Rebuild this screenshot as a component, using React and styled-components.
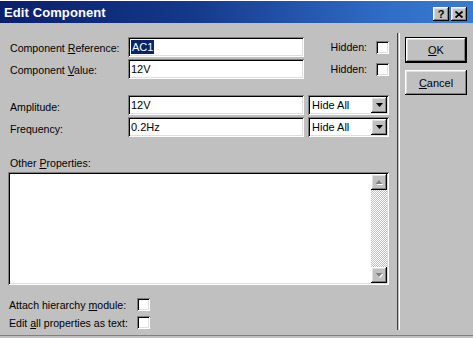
import React from "react";
import styled, { createGlobalStyle } from "styled-components";

const GlobalStyle = createGlobalStyle`
  html, body { margin: 0; padding: 0; background: #c0c0c0; }
  body { font-family: "Liberation Sans", Arial, sans-serif; }
`;

const raised = `
  background: #c0c0c0;
  box-shadow: inset -1px -1px #000, inset 1px 1px #fff, inset -2px -2px #808080, inset 2px 2px #dfdfdf;
`;
const sunken = `
  background: #fff;
  box-shadow: inset 1px 1px #808080, inset -1px -1px #fff, inset 2px 2px #000, inset -2px -2px #dfdfdf;
`;

const Window = styled.div`
  width: 473px;
  height: 338px;
  box-sizing: border-box;
  background: #c0c0c0;
  border-top: 1px solid #fff;
  display: flex;
  flex-direction: column;
  font-family: "Liberation Sans", Arial, sans-serif;
  font-size: 10.6px;
  color: #000;
  overflow: hidden;
`;

const TitleBar = styled.div`
  height: 22px;
  flex: none;
  display: flex;
  align-items: center;
  padding: 0 6px 0 4px;
  background: linear-gradient(to right, #0a1f6c 0%, #14388a 40%, #2f6bc4 80%, #3a7cd2 100%);
`;

const Title = styled.div`
  flex: 1;
  color: #fff;
  font-weight: bold;
  font-size: 13px;
  letter-spacing: 0.1px;
`;

const TitleButtons = styled.div`
  display: flex;
  gap: 2px;
  align-self: flex-end;
  margin-bottom: 2px;
`;

const CaptionButton = styled.div`
  ${raised}
  width: 16px;
  height: 14px;
  display: flex;
  align-items: center;
  justify-content: center;
  font-weight: bold;
  font-size: 11px;
  line-height: 1;
`;

const Body = styled.div`
  flex: 1;
  display: flex;
  border-bottom: 1px solid #808080;
  margin-bottom: 2px;
`;

const LeftPane = styled.div`
  width: 397px;
  box-sizing: border-box;
  padding: 14px 8px 0 8px;
  display: flex;
  flex-direction: column;
`;

const Separator = styled.div`
  width: 1px;
  border-left: 1px solid #404040;
  border-right: 1px solid #fff;
  margin: 10px 0 5px;
`;

const RightPane = styled.div`
  flex: 1;
  padding: 14px 0 0 5px;
  display: flex;
  flex-direction: column;
  gap: 7px;
`;

const Fields = styled.div`
  display: grid;
  grid-template-columns: 120px 176px 85px;
  grid-auto-rows: 20px;
  row-gap: 2px;
  align-items: center;
  margin-top: ${(p) => p.$gap || 0}px;
`;

const Label = styled.div`
  padding-left: ${(p) => (p.$indent != null ? p.$indent : 2)}px;
  padding-top: ${(p) => p.$drop || 0}px;
  white-space: nowrap;
  line-height: 14px;
`;

const U = styled.span`
  text-decoration: underline;
  text-underline-offset: 1px;
`;

const TextField = styled.div`
  ${sunken}
  height: 20px;
  box-sizing: border-box;
  display: flex;
  align-items: center;
  padding-left: 3px;
  font-size: 11px;
`;

const Selected = styled.span`
  background: #0a246a;
  color: #fff;
  padding: 1px 1px;
`;

const HiddenCell = styled.div`
  display: flex;
  align-items: center;
  justify-content: flex-end;
  gap: 9px;
`;

const Check = styled.div`
  ${sunken}
  width: 13px;
  height: 13px;
  box-sizing: border-box;
`;

const SelectBox = styled.div`
  ${sunken}
  margin-left: 4px;
  height: 20px;
  box-sizing: border-box;
  padding: 2px;
  display: flex;
  align-items: stretch;
  font-size: 11px;
`;

const SelectText = styled.div`
  flex: 1;
  display: flex;
  align-items: center;
  padding-left: 2px;
`;

const DropButton = styled.div`
  ${raised}
  width: 16px;
  display: flex;
  align-items: center;
  justify-content: center;
`;

const SectionLabel = styled(Label)`
  margin-top: 19px;
  margin-bottom: 2px;
`;

const Memo = styled.div`
  ${sunken}
  height: 113px;
  box-sizing: border-box;
  padding: 2px;
  display: flex;
  justify-content: flex-end;
`;

const ScrollBar = styled.div`
  width: 16px;
  display: flex;
  flex-direction: column;
`;

const ScrollTrack = styled.div`
  flex: 1;
  background-image: conic-gradient(#fff 25%, #c0c0c0 0 50%, #fff 0 75%, #c0c0c0 0);
  background-size: 2px 2px;
`;

const ScrollButton = styled.div`
  ${raised}
  height: 16px;
  display: flex;
  align-items: center;
  justify-content: center;
`;

const Options = styled.div`
  display: grid;
  grid-template-columns: 129px 13px;
  grid-auto-rows: 13px;
  row-gap: 5px;
  align-items: center;
  margin-top: 13px;
`;

const Button = styled.div`
  ${raised}
  width: 62px;
  height: ${(p) => (p.$default ? 26 : 25)}px;
  box-sizing: border-box;
  display: flex;
  align-items: center;
  justify-content: center;
  font-size: 11px;
  ${(p) =>
    p.$default
      ? `box-shadow: inset 0 0 0 1px #000, inset -2px -2px #000, inset 2px 2px #fff, inset -3px -3px #808080, inset 3px 3px #dfdfdf;`
      : ""}
`;

const ArrowDown = ({ color = "#000" }) => (
  <svg width="7" height="4" viewBox="0 0 7 4">
    <polygon points="0,0 7,0 3.5,4" fill={color} />
  </svg>
);

const DisabledArrow = ({ up }) => (
  <svg width="8" height="6" viewBox="0 0 8 6">
    {up ? (
      <>
        <polygon points="4,1 7.5,5 0.5,5" fill="#fff" transform="translate(1,1)" />
        <polygon points="4,1 7.5,5 0.5,5" fill="#808080" />
      </>
    ) : (
      <>
        <polygon points="0.5,1 7.5,1 4,5" fill="#fff" transform="translate(1,1)" />
        <polygon points="0.5,1 7.5,1 4,5" fill="#808080" />
      </>
    )}
  </svg>
);

const CloseGlyph = () => (
  <svg width="8" height="7" viewBox="0 0 8 7">
    <path d="M0.5 0.5 L7.5 6.5 M7.5 0.5 L0.5 6.5" stroke="#000" strokeWidth="1.8" />
  </svg>
);

export default function App() {
  return (
    <>
      <GlobalStyle />
      <Window>
        <TitleBar>
          <Title>Edit Component</Title>
          <TitleButtons>
            <CaptionButton>?</CaptionButton>
            <CaptionButton>
              <CloseGlyph />
            </CaptionButton>
          </TitleButtons>
        </TitleBar>
        <Body>
          <LeftPane>
            <Fields>
              <Label $drop={1}>
                Component <U>R</U>eference:
              </Label>
              <TextField>
                <Selected>AC1</Selected>
              </TextField>
              <HiddenCell>
                <span>Hidden:</span>
                <Check />
              </HiddenCell>
              <Label $drop={1}>
                Component <U>V</U>alue:
              </Label>
              <TextField>12V</TextField>
              <HiddenCell>
                <span>Hidden:</span>
                <Check />
              </HiddenCell>
            </Fields>
            <Fields $gap={16}>
              <Label $drop={3}>Amplitude:</Label>
              <TextField>12V</TextField>
              <SelectBox>
                <SelectText>Hide All</SelectText>
                <DropButton>
                  <ArrowDown />
                </DropButton>
              </SelectBox>
              <Label $drop={3}>Frequency:</Label>
              <TextField>0.2Hz</TextField>
              <SelectBox>
                <SelectText>Hide All</SelectText>
                <DropButton>
                  <ArrowDown />
                </DropButton>
              </SelectBox>
            </Fields>
            <SectionLabel>
              Other <U>P</U>roperties:
            </SectionLabel>
            <Memo>
              <ScrollBar>
                <ScrollButton>
                  <DisabledArrow up />
                </ScrollButton>
                <ScrollTrack />
                <ScrollButton>
                  <DisabledArrow />
                </ScrollButton>
              </ScrollBar>
            </Memo>
            <Options>
              <Label $indent={1}>
                Attach hierarchy <U>m</U>odule:
              </Label>
              <Check />
              <Label $indent={1}>
                Edit <U>a</U>ll properties as text:
              </Label>
              <Check />
            </Options>
          </LeftPane>
          <Separator />
          <RightPane>
            <Button $default>
              <span>
                <U>O</U>K
              </span>
            </Button>
            <Button>
              <span>
                <U>C</U>ancel
              </span>
            </Button>
          </RightPane>
        </Body>
      </Window>
    </>
  );
}
